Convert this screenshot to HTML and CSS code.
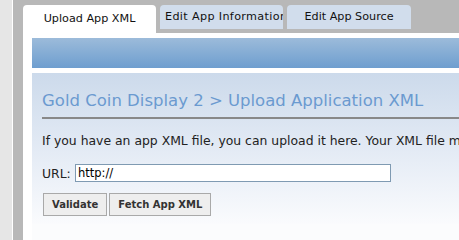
FILE: index.html
```html
<!DOCTYPE html>
<html>
<head>
<meta charset="utf-8">
<link rel="stylesheet" href="styles.css">
</head>
<body>
<div class="page">
  <div class="sidebar"></div>
  <div class="main">
    <div class="tabs">
      <div class="tab active">Upload App XML</div>
      <div class="tab">Edit App Information</div>
      <div class="tab">Edit App Source</div>
    </div>
    <div class="box">
      <div class="bar"></div>
      <div class="panel">
        <h1 class="title">Gold Coin Display 2 &gt; Upload Application XML</h1>
        <p class="intro">If you have an app XML file, you can upload it here. Your XML file must be valid.</p>
        <div class="url-row">
          <label class="url-label">URL:</label>
          <input class="url-input" type="text" value="http://">
        </div>
        <div class="buttons">
          <button class="btn">Validate</button>
          <button class="btn">Fetch App XML</button>
        </div>
      </div>
    </div>
  </div>
</div>
</body>
</html>
```
FILE: styles.css
```css
html, body {
  margin: 0;
  padding: 0;
  height: 100%;
  overflow: hidden;
}
body {
  font-family: "DejaVu Sans", Verdana, sans-serif;
  background: #b8b8b8;
}
.page {
  display: flex;
  height: 100vh;
  min-height: 224px;
  width: 100%;
  overflow: hidden;
}
.sidebar {
  flex: 0 0 12px;
  background: #e6e6e6;
  border-right: 1px solid #ffffff;
}
.main {
  flex: 1;
  padding: 5px 0 0 10px;
  display: flex;
  flex-direction: column;
  min-width: 0;
}
.tabs {
  display: flex;
  align-items: flex-start;
  height: 28px;
  flex: 0 0 28px;
}
.tab {
  box-sizing: border-box;
  flex: 0 0 auto;
  height: 24px;
  background: #d1ddec;
  border-radius: 4px 4px 0 0;
  font-size: 11.2px;
  line-height: 24px;
  color: #111;
  text-align: center;
  white-space: nowrap;
  overflow: hidden;
  margin-right: 4px;
  width: 123px;
}
.tab.active {
  background: #ffffff;
  height: 28px;
  width: 133px;
  line-height: 26px;
  padding-top: 1px;
}
.tab:nth-child(2) {
  text-align: left;
  padding-left: 5px;
  letter-spacing: 0.35px;
}
.tab:nth-child(3) {
  width: 124px;
}
.box {
  flex: 1;
  background: #ffffff;
  padding: 5px 0 0 9px;
  display: flex;
  flex-direction: column;
}
.bar {
  flex: 0 0 30px;
  background: linear-gradient(#9cbbda, #6e9ecf);
}
.panel {
  flex: 1;
  margin-top: 5px;
  padding: 18px 0 0 10px;
  background: linear-gradient(#ccdaeb, #e4ebf5 52%, #fafbfd 100%);
  background-size: 100% 151px;
  background-repeat: no-repeat;
  background-color: #fbfcfd;
  white-space: nowrap;
}
.title {
  margin: 0;
  font-size: 16.5px;
  font-weight: normal;
  color: #6b9ad0;
  line-height: 20px;
  padding-bottom: 6px;
  border-bottom: 2px solid #888888;
}
.intro {
  margin: 14px 0 0;
  font-size: 12.4px;
  line-height: 16px;
  color: #222;
}
.url-row {
  display: flex;
  align-items: center;
  margin-top: 15px;
}
.url-label {
  font-size: 12.4px;
  color: #222;
  width: 33px;
}
.url-input {
  box-sizing: border-box;
  width: 316px;
  height: 18px;
  border: 1px solid #7f9ab2;
  padding: 0 2px;
  font-family: "DejaVu Sans", Verdana, sans-serif;
  font-size: 11.5px;
  color: #000;
  outline: none;
}
.buttons {
  display: flex;
  gap: 2px;
  margin-top: 11px;
  margin-left: 1px;
}
.btn {
  box-sizing: border-box;
  height: 23px;
  background: #eeeeee;
  border: 1px solid #a9a9a9;
  font-family: "DejaVu Sans", Verdana, sans-serif;
  font-size: 10px;
  font-weight: bold;
  color: #333;
  padding: 0 8px;
}
```
